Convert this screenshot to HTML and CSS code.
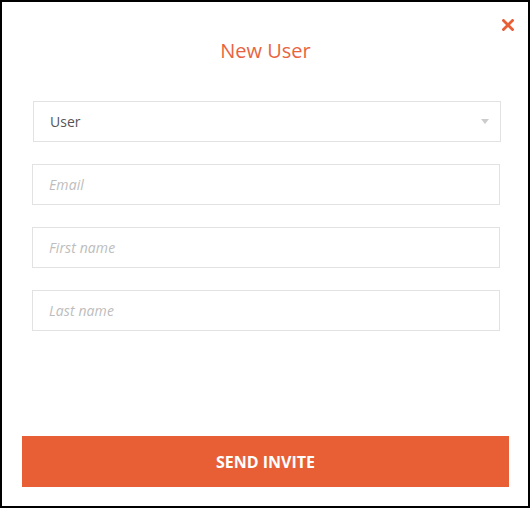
FILE: index.html
```html
<!DOCTYPE html>
<html>
<head>
<meta charset="utf-8">
<link rel="stylesheet" href="styles.css">
</head>
<body>
<div class="modal">
  <button class="close" aria-label="Close">
    <svg width="12" height="12" viewBox="0 0 12 12"><path d="M1.5 1.5 L10.5 10.5 M10.5 1.5 L1.5 10.5" stroke="#e85f36" stroke-width="2.8" stroke-linecap="square"/></svg>
  </button>
  <h1 class="title">New User</h1>
  <div class="fields">
    <div class="select">
      <span>User</span>
      <svg class="caret" width="8" height="5" viewBox="0 0 8 5"><path d="M0 0 H8 L4 5 Z" fill="#cccccc"/></svg>
    </div>
    <div class="input">Email</div>
    <div class="input">First name</div>
    <div class="input">Last name</div>
  </div>
  <button class="send">SEND INVITE</button>
</div>
</body>
</html>
```

FILE: styles.css
```css
* { box-sizing: border-box; }
html, body { margin: 0; padding: 0; }
body {
  width: 530px;
  height: 508px;
  font-family: "Open Sans", "Liberation Sans", sans-serif;
  background: #fff;
}
.modal {
  position: relative;
  width: 530px;
  height: 508px;
  border: 2px solid #000;
  display: flex;
  flex-direction: column;
  padding: 0 19px 19px 20px;
}
.close {
  position: absolute;
  top: 16px;
  right: 13px;
  width: 14px;
  height: 14px;
  padding: 1px;
  border: 0;
  background: none;
  display: flex;
}
.title {
  margin: 35px 0 0;
  text-align: center;
  font-size: 20px;
  font-weight: 400;
  line-height: 28px;
  color: #e8643f;
}
.fields {
  margin-top: 36px;
  padding: 0 9px 0 10px;
  display: flex;
  flex-direction: column;
  gap: 22px;
}
.select, .input {
  height: 41px;
  border: 1px solid #e2e2e2;
  display: flex;
  align-items: center;
  padding: 0 11px 0 16px;
  font-size: 14px;
}
.select {
  margin-left: 1px;
  margin-right: -1px;
  color: #555;
  justify-content: space-between;
}
.input {
  color: #bdbdbd;
  font-style: italic;
  letter-spacing: 0.1px;
}
.send {
  margin-top: auto;
  height: 51px;
  border: 0;
  background: #e85f36;
  color: #fff;
  font-family: "Open Sans", "Liberation Sans", sans-serif;
  font-weight: 700;
  font-size: 16px;
  padding: 0;
}
```
